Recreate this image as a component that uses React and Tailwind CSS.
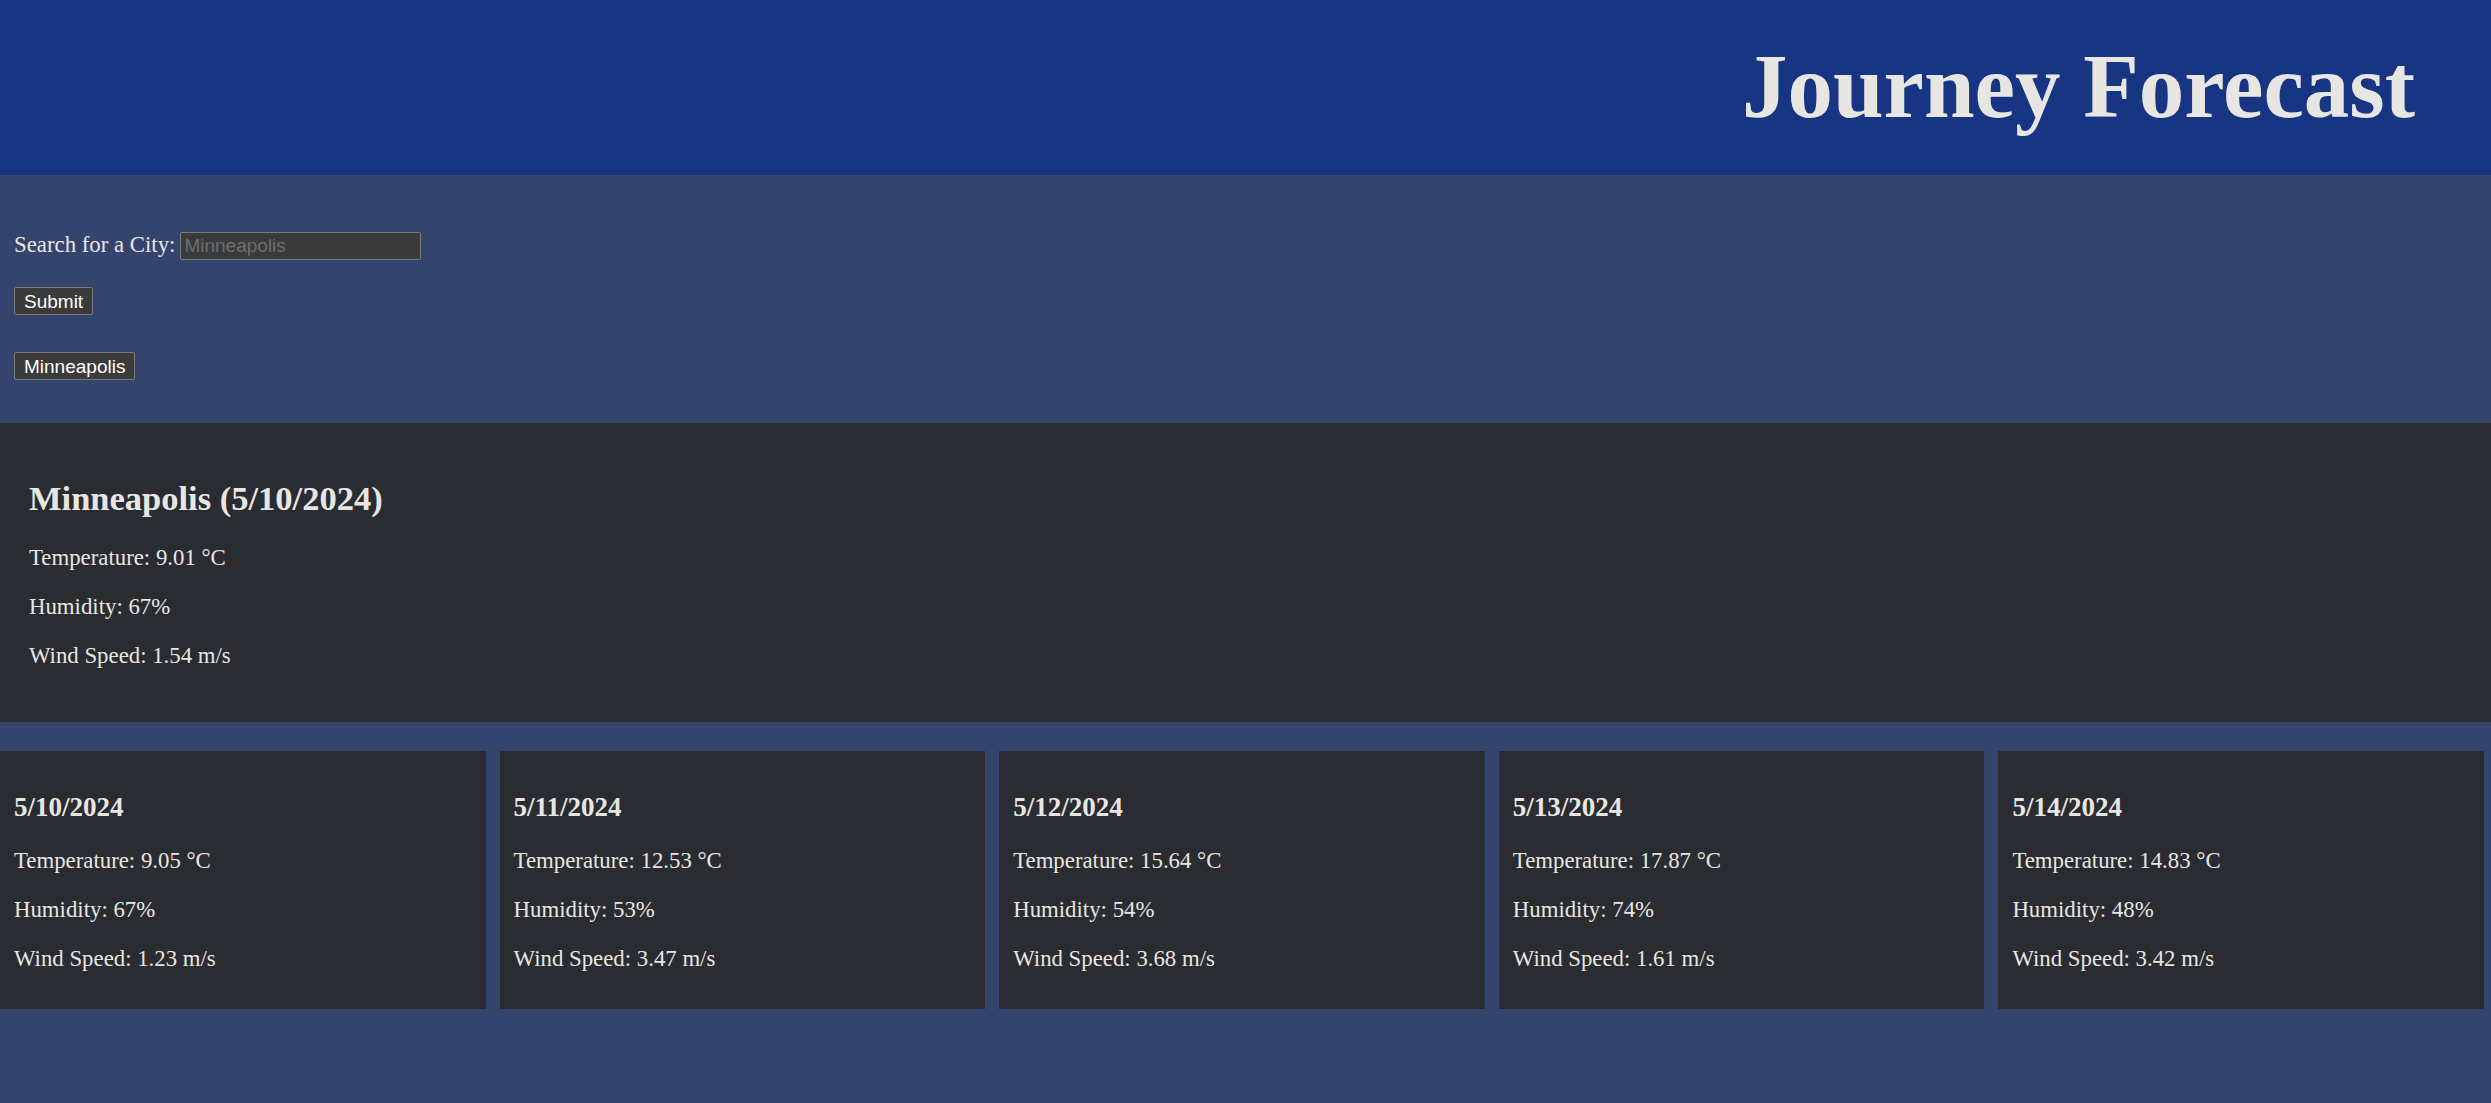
import React from 'react';

const current = {
  city: 'Minneapolis',
  date: '5/10/2024',
  temp: '9.01',
  humidity: '67',
  wind: '1.54',
};

const forecast = [
  { date: '5/10/2024', temp: '9.05', humidity: '67', wind: '1.23' },
  { date: '5/11/2024', temp: '12.53', humidity: '53', wind: '3.47' },
  { date: '5/12/2024', temp: '15.64', humidity: '54', wind: '3.68' },
  { date: '5/13/2024', temp: '17.87', humidity: '74', wind: '1.61' },
  { date: '5/14/2024', temp: '14.83', humidity: '48', wind: '3.42' },
];

const serif = "font-['Liberation_Serif','Times_New_Roman',serif]";
const sans = "font-['Liberation_Sans',Arial,sans-serif]";

const Stat = ({ children, className = '' }) => (
  <p className={`text-[22.8px] leading-[26px] ${className}`}>{children}</p>
);

const ForecastCard = ({ day }) => (
  <div className="bg-[#292c30] pt-[41px] pb-[37px] pl-[14px]">
    <h3 className="text-[27px] leading-[31px] font-bold">{day.date}</h3>
    <Stat className="mt-[25px]">Temperature: {day.temp} °C</Stat>
    <Stat className="mt-[23px]">Humidity: {day.humidity}%</Stat>
    <Stat className="mt-[23px]">Wind Speed: {day.wind} m/s</Stat>
  </div>
);

export default function App() {
  return (
    <div className={`min-h-screen bg-[#34446d] text-[#e8e6e3] ${serif}`}>
      <header className="h-[175px] bg-[#173582] pt-[41px] pr-[76px] text-right">
        <h1 className="text-[91px] leading-none font-bold">Journey Forecast</h1>
      </header>

      <section className="pt-[57px] pb-[43px] pl-[14px]">
        <div className="flex items-start">
          <label className="text-[22.8px] leading-[26px]">Search for a City:</label>
          <input
            type="text"
            placeholder="Minneapolis"
            className={`ml-[5px] h-[28px] w-[241px] rounded-[2px] border border-[#7a7a7a] bg-[#3b3b3b] pl-[3px] text-[19px] text-white placeholder:text-[#6e6e6e] outline-none ${sans}`}
          />
        </div>
        <button
          className={`mt-[27px] block h-[28px] rounded-[2px] border border-[#7a7a7a] bg-[#3b3b3b] px-[9px] text-[19px] leading-none text-white ${sans}`}
        >
          Submit
        </button>
        <button
          className={`mt-[37px] block h-[28px] rounded-[2px] border border-[#7a7a7a] bg-[#3b3b3b] px-[9px] text-[19px] leading-none text-white ${sans}`}
        >
          Minneapolis
        </button>
      </section>

      <section className="bg-[#292c30] pt-[55px] pb-[53px] pl-[29px]">
        <h2 className="text-[34.5px] leading-[40px] font-bold">
          {current.city} ({current.date})
        </h2>
        <Stat className="mt-[27px]">Temperature: {current.temp} °C</Stat>
        <Stat className="mt-[23px]">Humidity: {current.humidity}%</Stat>
        <Stat className="mt-[23px]">Wind Speed: {current.wind} m/s</Stat>
      </section>

      <div className="mt-[29px] grid w-[2484px] grid-cols-5 gap-[14px]">
        {forecast.map((day) => (
          <ForecastCard key={day.date} day={day} />
        ))}
      </div>
    </div>
  );
}
